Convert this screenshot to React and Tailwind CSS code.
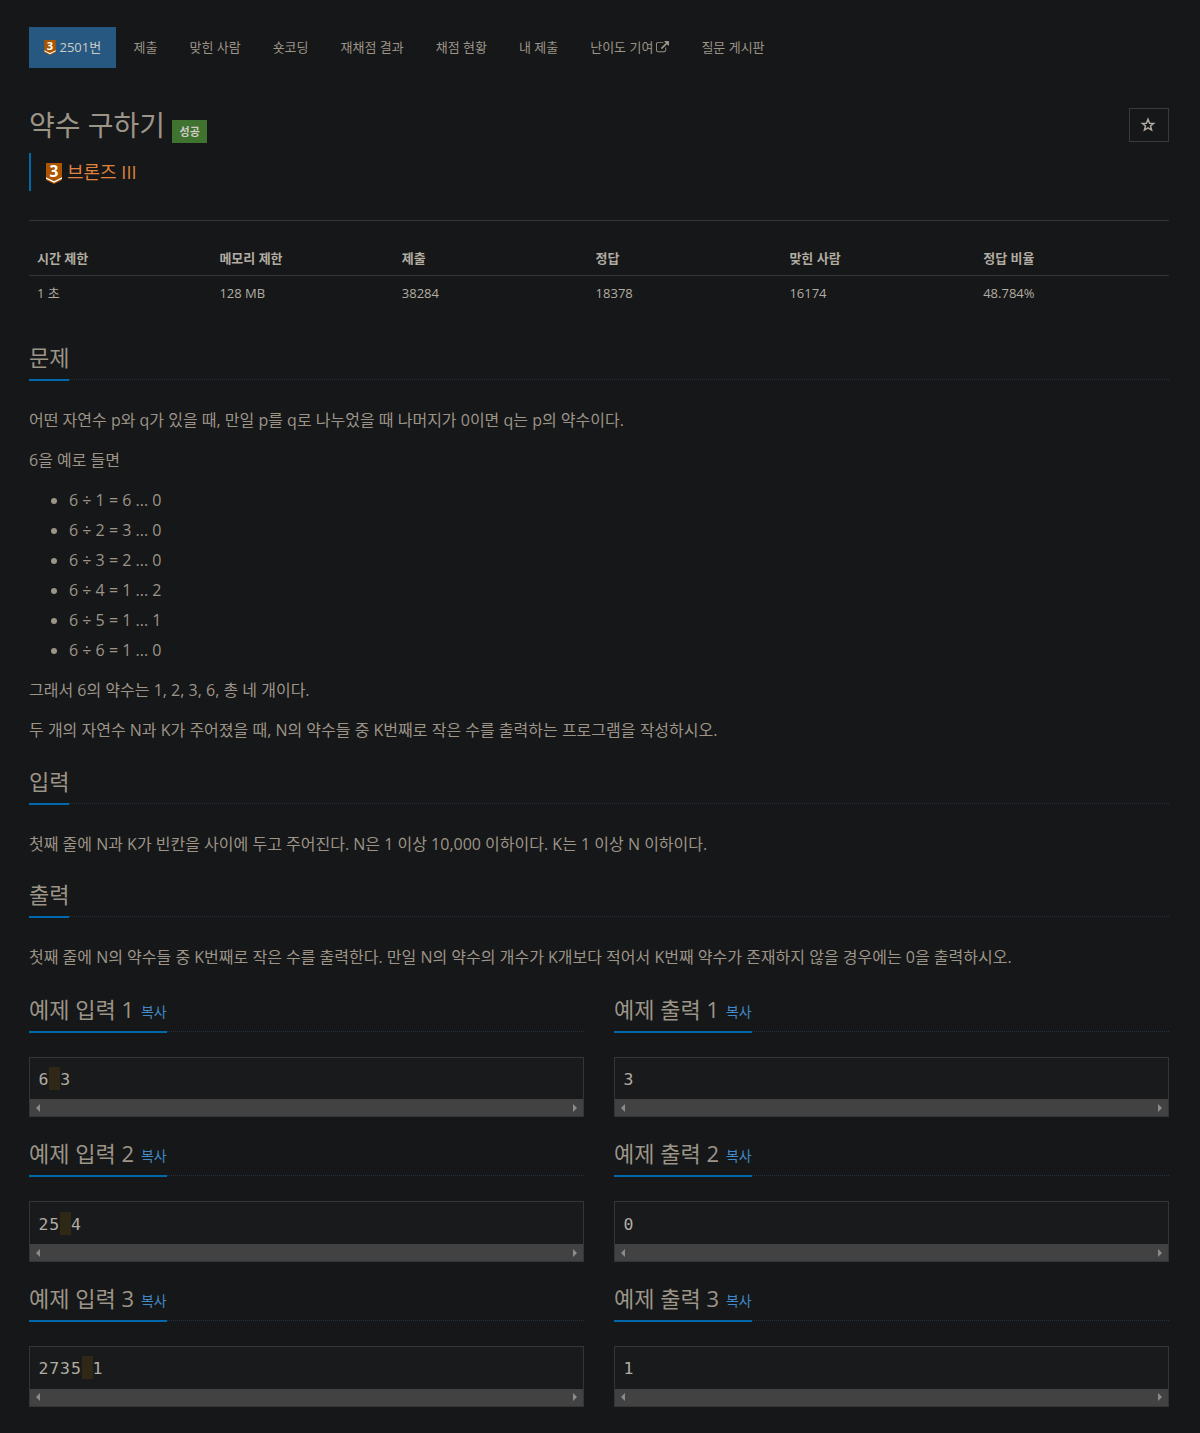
import clsx from 'clsx';

const tabs = ['제출', '맞힌 사람', '숏코딩', '재채점 결과', '채점 현황', '내 제출', '난이도 기여', '질문 게시판'];

const info = [
  { label: '시간 제한', value: '1 초', width: 'w-[16%]' },
  { label: '메모리 제한', value: '128 MB', width: 'w-[16%]' },
  { label: '제출', value: '38284', width: 'w-[17%]' },
  { label: '정답', value: '18378', width: 'w-[17%]' },
  { label: '맞힌 사람', value: '16174', width: 'w-[17%]' },
  { label: '정답 비율', value: '48.784%', width: 'w-[17%]' },
];

const divisions = [
  '6 ÷ 1 = 6 ... 0',
  '6 ÷ 2 = 3 ... 0',
  '6 ÷ 3 = 2 ... 0',
  '6 ÷ 4 = 1 ... 2',
  '6 ÷ 5 = 1 ... 1',
  '6 ÷ 6 = 1 ... 0',
];

const samples = [
  { input: ['6', '3'], output: ['3'] },
  { input: ['25', '4'], output: ['0'] },
  { input: ['2735', '1'], output: ['1'] },
];

function TierIcon({ className }) {
  return (
    <svg viewBox="0 0 16 21" className={clsx('overflow-visible', className)}>
      <path d="M0 0h16v17l-8 4-8-4z" fill="#ad5600" />
      <path d="M0 14.200l8 4 8-4v1.600l-8 4-8-4z" fill="#fff" />
      <text x="8" y="13.900" textAnchor="middle" fontSize="15.5" fontWeight="700" fill="#fff" fontFamily="Open Sans">
        3
      </text>
    </svg>
  );
}

function ExternalIcon() {
  return (
    <svg viewBox="0 0 1792 1792" className="mb-px ml-[3px] h-[13px] w-[13px]" fill="currentColor">
      <path d="M1408 928v320q0 119-84.500 203.500t-203.500 84.500h-832q-119 0-203.500-84.500t-84.500-203.500v-832q0-119 84.500-203.500t203.500-84.500h704q14 0 23 9t9 23v64q0 14-9 23t-23 9h-704q-66 0-113 47t-47 113v832q0 66 47 113t113 47h832q66 0 113-47t47-113v-320q0-14 9-23t23-9h64q14 0 23 9t9 23zm384-864v512q0 26-19 45t-45 19-45-19l-176-176-652 652q-10 10-23 10t-23-10l-114-114q-10-10-10-23t10-23l652-652-176-176q-19-19-19-45t19-45 45-19h512q26 0 45 19t19 45z" />
    </svg>
  );
}

function Heading({ children, className }) {
  return (
    <div className={clsx('flex items-end', className)}>
      <h2 className="flex h-full items-start border-b-2 border-[#0069ab] text-[22px]">{children}</h2>
      <div className="mb-px flex-1 border-b border-dotted border-[#243140]" />
    </div>
  );
}

function Sample({ title, tokens }) {
  return (
    <div className="flex h-[144.55px] flex-col">
      <Heading className="h-[42px] leading-[36px]">
        {title}
        <a href="#" className="ml-[7px] pt-[3px] text-[14px] text-[#4189c7]">복사</a>
      </Heading>
      <div className="mt-6 flex h-[60.54px] flex-col border border-[#333639] bg-[#181a1b]">
        <pre className="flex flex-1 items-center pl-[8.5px] font-['DejaVu_Sans_Mono',monospace] text-[16.5px] leading-[23px] tracking-[0.87px] text-[#b2aca2]">
          {tokens.map((token, i) => (
            <span key={i} className="flex h-[23px]">
              {i > 0 && <span className="bg-[#2f2816]"> </span>}
              <span className="pt-px">{token}</span>
            </span>
          ))}
        </pre>
        <div className="flex h-[17px] items-center justify-between bg-[#424242] px-1.5 text-[#8b8b8b]">
          <svg viewBox="0 0 4 8" className="h-2 w-1" fill="currentColor"><path d="M4 0v8L0 4z" /></svg>
          <svg viewBox="0 0 4 8" className="h-2 w-1" fill="currentColor"><path d="M0 0v8l4-4z" /></svg>
        </div>
      </div>
    </div>
  );
}

export default function App() {
  return (
    <div className="h-[1433px] bg-[#151718] pt-[27px] pr-[31px] pl-[29px] font-['Open_Sans','Noto_Sans_CJK_KR',sans-serif] text-[16px] leading-[30px] text-[#9d9488]">
      <nav className="flex h-[41px] text-[13px] leading-[40px]">
        <a href="#" className="mr-[2.5px] flex w-[87px] items-center bg-[#265882] pl-[15px] text-[#cfccc7]">
          <TierIcon className="mr-[3.5px] h-[15px] w-3" />
          <span className="h-[41px]">2501번</span>
        </a>
        {tabs.map((tab) => (
          <a key={tab} href="#" className="mr-0.5 flex items-center px-[15px]">
            <span className="h-[41px]">{tab}</span>
            {tab === '난이도 기여' && <ExternalIcon />}
          </a>
        ))}
      </nav>

      <header className="mt-10 flex h-[45px] items-start justify-between">
        <div className="flex items-start">
          <h1 className="text-[28px] leading-[34px]">약수 구하기</h1>
          <span className="mt-3 ml-[7px] h-[23px] bg-[#407230] px-[7.5px] text-[11px] font-bold leading-[23px] text-[#cfccc7]">성공</span>
        </div>
        <button className="flex h-[34px] w-10 items-center justify-center border border-[#373b3d] pr-0.5 text-[#b2aca2]">
          <svg viewBox="0 0 14 14" className="h-4 w-4" fill="none" stroke="currentColor" strokeWidth="1.3">
            <path d="M7 2l1.400 3.400 3.600.2-2.800 2.300.9 3.500L7 9.500l-3.100 1.900.9-3.500L2 5.600l3.600-.2z" />
          </svg>
        </button>
      </header>

      <div className="flex h-[38px] items-center border-l-2 border-[#0069ab] pl-[15px] text-[18px] text-[#e0823d]">
        <TierIcon className="mt-[3px] mr-[5px] h-[21px] w-4" />
        브론즈 III
      </div>

      <hr className="mt-[29px] border-[#333639]" />

      <table className="mt-5 w-full table-fixed text-left text-[13px] leading-[21px] text-[#b2aca2]">
        <thead>
          <tr className="h-[34px] border-b border-[#333639]">
            {info.map((col) => (
              <th key={col.label} className={clsx('px-2 pt-0.5 font-bold', col.width)}>{col.label}</th>
            ))}
          </tr>
        </thead>
        <tbody>
          <tr className="h-[36px]">
            {info.map((col) => (
              <td key={col.label} className="px-2">{col.value}</td>
            ))}
          </tr>
        </tbody>
      </table>

      <Heading className="mt-[29px] h-[41px] leading-[34px]">문제</Heading>
      <div className="mt-6 flex flex-col gap-2.5">
        <p>어떤 자연수 p와 q가 있을 때, 만일 p를 q로 나누었을 때 나머지가 0이면 q는 p의 약수이다.</p>
        <p>6을 예로 들면</p>
        <ul className="list-disc pl-10">
          {divisions.map((line) => (
            <li key={line}>{line}</li>
          ))}
        </ul>
        <p>그래서 6의 약수는 1, 2, 3, 6, 총 네 개이다.</p>
        <p>두 개의 자연수 N과 K가 주어졌을 때, N의 약수들 중 K번째로 작은 수를 출력하는 프로그램을 작성하시오.</p>
      </div>

      <Heading className="mt-[19px] h-[41px] leading-[34px]">입력</Heading>
      <p className="mt-6">첫째 줄에 N과 K가 빈칸을 사이에 두고 주어진다. N은 1 이상 10,000 이하이다. K는 1 이상 N 이하이다.</p>

      <Heading className="mt-[18px] h-[41px] leading-[34px]">출력</Heading>
      <p className="mt-6">
        첫째 줄에 N의 약수들 중 K번째로 작은 수를 출력한다. 만일 N의 약수의 개수가 K개보다 적어서 K번째 약수가 존재하지 않을 경우에는 0을 출력하시오.
      </p>

      <div className="mt-[18.94px] grid grid-cols-2 gap-x-[30px]">
        {samples.map((sample, i) => [
          <Sample key={`in-${i}`} title={`예제 입력 ${i + 1}`} tokens={sample.input} />,
          <Sample key={`out-${i}`} title={`예제 출력 ${i + 1}`} tokens={sample.output} />,
        ])}
      </div>
    </div>
  );
}
